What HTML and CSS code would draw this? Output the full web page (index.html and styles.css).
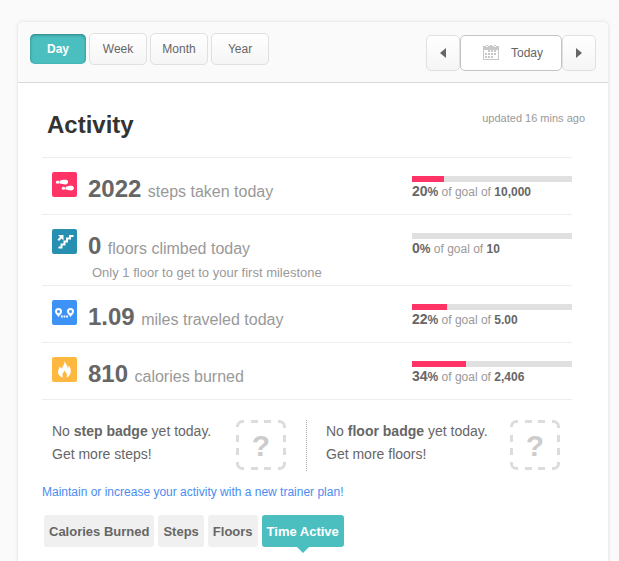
FILE: index.html
```html
<!DOCTYPE html>
<html lang="en">
<head>
  <meta charset="UTF-8"/>
  <meta name="viewport" content="width=device-width,initial-scale=1"/>
  <title>Activity</title>
  <link rel="stylesheet" href="styles.css">
</head>
<body>
  <main class="card">
    <header class="toolbar">
      <div class="periods">
        <button type="button" class="btn active">Day</button>
        <button type="button" class="btn">Week</button>
        <button type="button" class="btn">Month</button>
        <button type="button" class="btn">Year</button>
      </div>
      <div class="pager">
        <button type="button" class="btn arrow" aria-label="Previous day">
          <svg width="6" height="10" viewBox="0 0 6 10"><path d="M6 0v10L0 5z" fill="#666"/></svg>
        </button>
        <button type="button" class="btn today">
          <svg width="16" height="16" viewBox="0 0 16 16" shape-rendering="crispEdges">
            <path d="M0 1h3v1h2V1h6v1h2V1h3v14H0zM1 5v9h14V5z" fill="#c8c8c8" fill-rule="evenodd"/>
            <path d="M3 0h2v1H3zM11 0h2v1h-2zM7 0h2v1H7zM5 5h2v2H5zM8 5h2v2H8zM11 5h2v2h-2zM2 8h2v2H2zM5 8h2v2H5zM8 8h2v2H8zM11 8h2v2h-2zM2 11h2v2H2zM5 11h2v2H5zM8 11h2v2H8z" fill="#c8c8c8"/>
          </svg>
          <span>Today</span>
        </button>
        <button type="button" class="btn arrow" aria-label="Next day">
          <svg width="6" height="10" viewBox="0 0 6 10"><path d="M0 0v10l6-5z" fill="#666"/></svg>
        </button>
      </div>
    </header>

    <section class="content">
      <div class="title">
        <h1>Activity</h1>
        <span class="updated">updated 16 mins ago</span>
      </div>

      <ul class="stats">
        <li class="stat">
          <svg class="icon" width="25" height="25" viewBox="0 0 25 25">
            <rect width="25" height="25" rx="2" fill="#ff3366"/>
            <g fill="#fff">
              <ellipse cx="5.6" cy="10.2" rx="1.7" ry="1.6"/>
              <path d="M7.500 8.800c2-.8 4.500-1.500 6.500-1 1.500.2 2.200 1.300 2 2.400-.2 1.500-1.400 2.300-3 2.200-1.800 0-3-1-5.500-1z"/>
              <ellipse cx="11.500" cy="16.200" rx="1.700" ry="1.500"/>
              <path d="M13.500 15c2-.9 4-1.600 6.100-1.300 1.700.2 2.500 1.300 2.300 2.600-.2 1.500-1.500 2.300-3.200 2.200-1.700 0-3-.9-5.200-.9z"/>
            </g>
          </svg>
          <div class="stat-text">
            <p><strong>2022</strong> steps taken today</p>
          </div>
          <div class="goal">
            <div class="bar"><div class="fill" style="width:20%"></div></div>
            <p><b class="pct">20</b><b>%</b> of goal of <b>10,000</b></p>
          </div>
        </li>
        <li class="stat">
          <svg class="icon" width="25" height="25" viewBox="0 0 25 25">
            <rect width="25" height="25" rx="2" fill="#278fb0"/>
            <path d="M6.500 18.500h3v-3h3v-3h2.500v-3h3v-2.500h3.500" fill="none" stroke="#fff" stroke-width="2"/>
            <path d="M6 6h5.500v5.500l-2-2L7 12l-1.500-1.500L8 8z" fill="#fff"/>
          </svg>
          <div class="stat-text">
            <p><strong>0</strong> floors climbed today</p>
            <p class="note">Only 1 floor to get to your first milestone</p>
          </div>
          <div class="goal">
            <div class="bar"><div class="fill" style="width:0%"></div></div>
            <p><b class="pct">0</b><b>%</b> of goal of <b>10</b></p>
          </div>
        </li>
        <li class="stat">
          <svg class="icon" width="25" height="25" viewBox="0 0 25 25">
            <rect width="25" height="25" rx="2" fill="#3d92f5"/>
            <path d="M6.500 8a3.500 3.500 0 0 1 3.500 3.500c0 2-2 3.500-3.500 5.500-1.500-2-3.500-3.500-3.500-5.500A3.500 3.500 0 0 1 6.500 8zm0 2a1.500 1.500 0 1 0 0 3 1.500 1.500 0 0 0 0-3zM18.500 8a3.500 3.500 0 0 1 3.500 3.500c0 2-2 3.500-3.500 5.500-1.500-2-3.500-3.500-3.500-5.500A3.500 3.500 0 0 1 18.500 8zm0 2a1.500 1.500 0 1 0 0 3 1.500 1.500 0 0 0 0-3z" fill="#fff" fill-rule="evenodd"/>
            <path d="M9 16.500h1.800M11.600 16.500h1.800M14.200 16.500h1.800" stroke="#fff" stroke-width="1.800"/>
          </svg>
          <div class="stat-text">
            <p><strong>1.09</strong> miles traveled today</p>
          </div>
          <div class="goal">
            <div class="bar"><div class="fill" style="width:22%"></div></div>
            <p><b class="pct">22</b><b>%</b> of goal of <b>5.00</b></p>
          </div>
        </li>
        <li class="stat">
          <svg class="icon" width="25" height="25" viewBox="0 0 25 25">
            <rect width="25" height="25" rx="2" fill="#ffb83f"/>
            <path d="M12.800 4c.2 2.500 2.600 3.800 3 7 .8-.6 1-1.500.8-2.500 1.500 1.700 2.400 3.800 2.100 6.500-.2 2.600-1.700 4.700-4.400 5.500.9-1.500 1-3 0-4.200-.7-.9-1.200-1.500-1.200-2.700-1.700 1.200-3.600 3.800-2 6.900-3-.6-5.100-2.700-5.100-5.500 0-2.300 1.400-3.600 1.700-5.500.8.600 1.200 1.300 1.300 2.300 2-1.800 3.400-4.800 3.800-7.800z" fill="#fff"/>
          </svg>
          <div class="stat-text">
            <p><strong>810</strong> calories burned</p>
          </div>
          <div class="goal">
            <div class="bar"><div class="fill" style="width:34%"></div></div>
            <p><b class="pct">34</b><b>%</b> of goal of <b>2,406</b></p>
          </div>
        </li>
      </ul>

      <div class="badges">
        <div class="badge">
          <p>No <b>step badge</b> yet today.<br>Get more steps!</p>
          <div class="empty">
            <svg width="50" height="50" viewBox="0 0 50 50"><path d="M1.500 7V6.500a5 5 0 0 1 5-5H8M15 1.500h7M28 1.500h7M42 1.500h1.500a5 5 0 0 1 5 5V8M48.500 15v7M48.500 28v7M48.500 42v1.500a5 5 0 0 1-5 5H42M35 48.500h-7M22 48.500h-7M8 48.500H6.500a5 5 0 0 1-5-5V42M1.500 35v-7M1.500 22v-7" fill="none" stroke="#dcdcdc" stroke-width="3"/></svg>
            <span>?</span>
          </div>
        </div>
        <div class="badge">
          <p>No <b>floor badge</b> yet today.<br>Get more floors!</p>
          <div class="empty">
            <svg width="50" height="50" viewBox="0 0 50 50"><path d="M1.500 7V6.500a5 5 0 0 1 5-5H8M15 1.500h7M28 1.500h7M42 1.500h1.500a5 5 0 0 1 5 5V8M48.500 15v7M48.500 28v7M48.500 42v1.500a5 5 0 0 1-5 5H42M35 48.500h-7M22 48.500h-7M8 48.500H6.500a5 5 0 0 1-5-5V42M1.500 35v-7M1.500 22v-7" fill="none" stroke="#dcdcdc" stroke-width="3"/></svg>
            <span>?</span>
          </div>
        </div>
      </div>

      <a class="plan" href="#">Maintain or increase your activity with a new trainer plan!</a>

      <div class="tabs">
        <button type="button" class="tab">Calories Burned</button>
        <button type="button" class="tab">Steps</button>
        <button type="button" class="tab">Floors</button>
        <button type="button" class="tab active">Time Active</button>
      </div>
    </section>
  </main>
</body>
</html>
```

FILE: styles.css
```css
:root {
  --teal: #4bbfbf;
  --pink: #ff3366;
  --text: #666666;
  --muted: #999999;
  --line: #eeeeee;
}
* { margin:0; padding:0; box-sizing:border-box; }
body {
  display: flex;
  min-height: 100vh;
  padding: 22px 11px 0 18px;
  background: #fafafa;
  color: var(--text);
  font-family: "Liberation Sans", Arial, sans-serif;
  font-size: 14px;
}
button { font-family:inherit; cursor:pointer; }
.card {
  flex: 1;
  background: #fff;
  border-radius: 5px 5px 0 0;
  box-shadow: 0 0 3px 1px #e6e6e6;
}

/* Toolbar */
.toolbar {
  display: flex;
  justify-content: space-between;
  height: 61px;
  padding: 11px 12px 0;
  background: #fafafa;
  border-bottom: 1px solid #d8d8d8;
  border-radius: 5px 5px 0 0;
}
.periods { display:flex; align-items:center; gap:3px; height:32px; }
.btn {
  width: 58px;
  height: 32px;
  border: 1px solid #e0e0e0;
  border-radius: 5px;
  background: linear-gradient(#fff, #f5f5f5);
  color: var(--text);
  font-size: 12px;
}
.btn.active {
  width: 56px;
  height: 30px;
  border: none;
  background: var(--teal);
  box-shadow: inset 0 1px 3px #2d7f80;
  color: #fff;
  font-weight: bold;
}
.pager { display:flex; padding-top:2px; }
.pager .btn {
  display: flex;
  align-items: center;
  justify-content: center;
  gap: 12px;
  height: 36px;
}
.pager .arrow { width:34px; }
.pager .today { width:102px; padding-left:4px; background:#fff; border-color:#c4c4c4; }

/* Stats */
.content { padding:0 36px 20px 24px; }
.title {
  display: flex;
  justify-content: space-between;
  height: 74px;
  padding-left: 5px;
}
h1 { padding-top:28px; color:#333; font-size:24px; line-height:28px; }
.updated {
  margin-right: -13px;
  padding-top: 28px;
  color: var(--muted);
  font-size: 11px;
  line-height: 14px;
}
.stats { list-style:none; border-bottom:1px solid var(--line); }
.stat {
  display: flex;
  min-height: 57px;
  padding-left: 10px;
  border-top: 1px solid var(--line);
}
.icon { flex:none; margin:14px 11px 0 0; }
.stat-text { flex:1; padding-top:17px; color:var(--muted); font-size:16px; line-height:28px; }
.stat-text strong { margin-right:2px; color:var(--text); font-size:24px; }
.stat-text .note { padding:0 0 2px 4px; font-size:13px; line-height:20px; }
.goal { width:160px; padding-top:18px; color:var(--muted); font-size:12px; line-height:18px; }
.goal b { color:var(--text); }
.goal .pct { font-size:14px; }
.bar { height:6px; background:#e0e0e0; }
.fill { height:6px; background:var(--pink); }

/* Badges */
.badges { display:flex; padding:20px 0 14px 10px; }
.badge {
  display: flex;
  flex: 1;
  justify-content: space-between;
  padding-right: 20px;
  line-height: 23px;
}
.badge + .badge { padding:0 12px 0 19px; border-left:1px dotted #aaa; }
.empty { position:relative; width:50px; height:51px; }
.empty span {
  position: absolute;
  inset: 0;
  color: #ccc;
  font-size: 30px;
  font-weight: bold;
  line-height: 52px;
  text-align: center;
}
.plan { display:block; color:#4a8df0; font-size:12px; line-height:14px; text-decoration:none; }

/* Tabs */
.tabs { display:flex; gap:4px; padding:16px 0 0 2px; }
.tab {
  position: relative;
  height: 32px;
  padding: 0 5px;
  border: none;
  border-radius: 3px;
  background: #f0f0f0;
  color: var(--text);
  font-size: 13px;
  font-weight: bold;
}
.tab.active { background:var(--teal); color:#fff; }
.tab.active::after {
  content: '';
  position: absolute;
  top: 100%;
  left: 50%;
  margin-left: -6px;
  border: 6px solid transparent;
  border-top-color: var(--teal);
  border-bottom: none;
}
```
